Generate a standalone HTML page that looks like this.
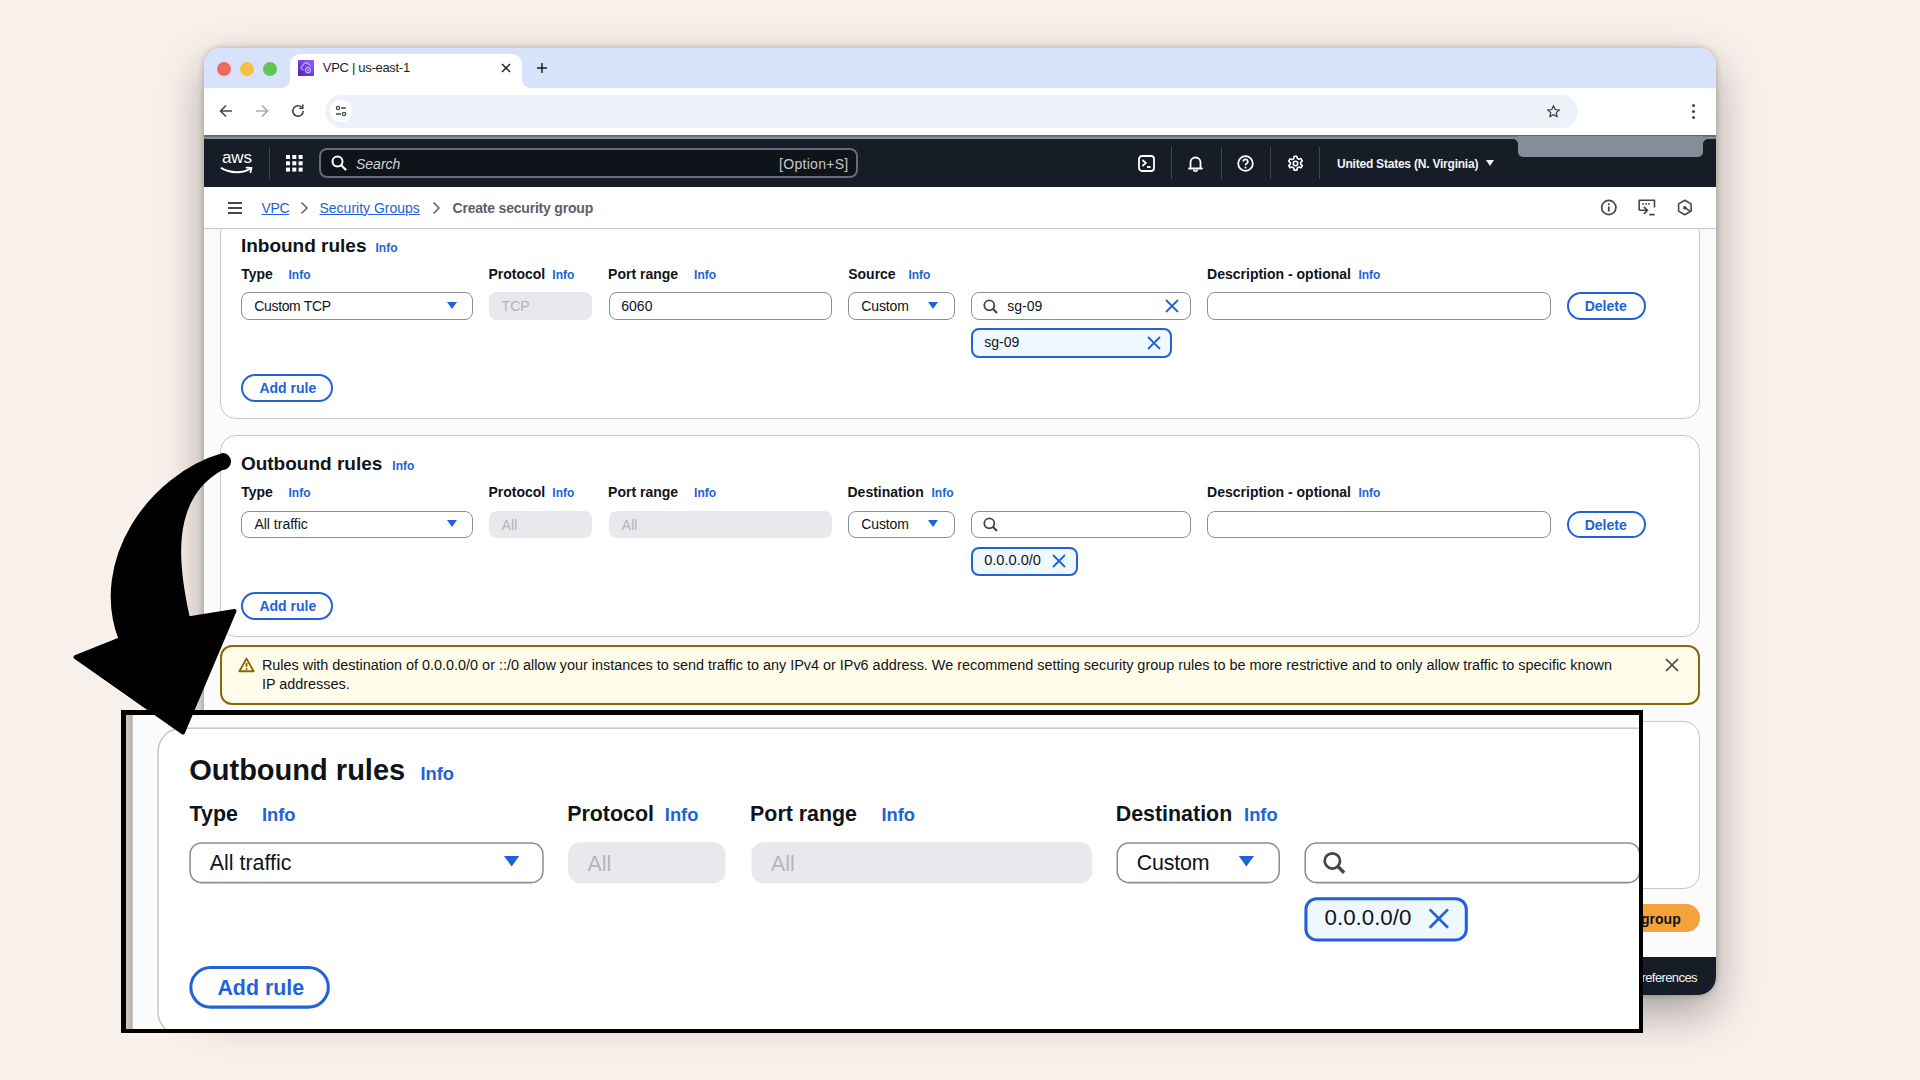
<!DOCTYPE html>
<html><head><meta charset="utf-8"><style>
*{box-sizing:border-box;margin:0;padding:0}
html,body{width:1920px;height:1080px;overflow:hidden}
body{position:relative;background:#f8f0eb;font-family:"Liberation Sans",sans-serif;color:#0f141a}
.a{position:absolute}
.t{position:absolute;line-height:1;white-space:nowrap;font-family:"Liberation Sans",sans-serif}
.b{font-weight:700}
.win{position:absolute;left:204px;top:48px;width:1512px;height:947px;border-radius:18px;overflow:hidden;background:#fbfbfb}
.shadow{position:absolute;left:204px;top:48px;width:1512px;height:947px;border-radius:18px;box-shadow:0 18px 44px rgba(10,8,5,.34),0 0 6px rgba(10,8,5,.24)}
.cont{position:absolute;left:16px;width:1480px;height:202px;background:#fff;border:1px solid #c6c6cd;border-radius:16px}
.lbl{font-size:14px;font-weight:700;color:#0f141a}
.info{font-size:12px;font-weight:700;color:#2262d8}
.inp{position:absolute;top:74.1px;height:27.2px;border:1px solid #8c8c94;border-radius:8px;background:#fff}
.dis{position:absolute;top:74.1px;height:27.2px;border-radius:8px;background:#e9e9ed}
.val{font-size:14px;color:#0f141a}
.dval{font-size:14px;color:#b4b4bb}
.tri{position:absolute;width:0;height:0;border-left:5.1px solid transparent;border-right:5.1px solid transparent;border-top:7.5px solid #2262d8}
.btn{position:absolute;border:2px solid #2262d8;border-radius:16px;background:#fff}
.btxt{font-size:14px;font-weight:700;color:#2262d8}
.tok{position:absolute;top:110.2px;height:29.1px;border:2px solid #2262d8;border-radius:8px;background:#f0f8ff}
</style></head><body>

<div class="shadow"></div>
<div class="win">
  
  <!-- tab bar -->
  <div class="a" style="left:0;top:0;width:1512px;height:40px;background:#d6e3fa"></div>
  <div class="a" style="left:13px;top:13.7px;width:14px;height:14px;border-radius:50%;background:#ee6a5f"></div>
  <div class="a" style="left:36px;top:13.7px;width:14px;height:14px;border-radius:50%;background:#f4c145"></div>
  <div class="a" style="left:59px;top:13.7px;width:14px;height:14px;border-radius:50%;background:#61c454"></div>
  <div class="a" style="left:86px;top:6px;width:232px;height:35px;background:#fff;border-radius:10px 10px 0 0"></div>
  <div class="a" style="left:78px;top:32px;width:8px;height:8px;background:radial-gradient(circle at 0 0,#d6e3fa 7.5px,#fff 8px)"></div>
  <div class="a" style="left:318px;top:32px;width:8px;height:8px;background:radial-gradient(circle at 100% 0,#d6e3fa 7.5px,#fff 8px)"></div>
  <div class="a" style="left:94px;top:12px;width:16px;height:16px;border-radius:1px;background:linear-gradient(45deg,#4a1fb0,#7a45e0 55%,#9060f5)"></div>
  <svg class="a" style="left:94px;top:12px" width="16" height="16" viewBox="0 0 16 16"><path d="M5.6 9.6C3.6 9.8 2.7 8.6 3 7.5C3.3 6.6 4 6.3 4.6 6.3C4.9 4.1 6.4 2.7 8 2.8C9.7 2.9 10.9 4 11.4 5C12.2 5.4 12.7 5.9 12.9 6.4" fill="none" stroke="#e6dcff" stroke-width="1"/><rect x="7.6" y="7.5" width="4.8" height="5.5" rx="2.3" fill="none" stroke="#e6dcff" stroke-width="1"/><path d="M9.4 9.2V11.4M10.6 9.2V11.4" stroke="#e6dcff" stroke-width=".6"/></svg>
  <div class="t" style="left:118.8px;top:13.1px;font-size:13px;color:#1f1f1f;letter-spacing:-0.3px">VPC | us-east-1</div>
  <svg class="a" style="left:296px;top:14px" width="12" height="12" viewBox="0 0 12 12"><path d="M2 2L10 10M10 2L2 10" stroke="#1f1f1f" stroke-width="1.5"/></svg>
  <svg class="a" style="left:332px;top:14px" width="12" height="12" viewBox="0 0 12 12"><path d="M6 1V11M1 6H11" stroke="#1f1f1f" stroke-width="1.5"/></svg>
  <!-- toolbar -->
  <div class="a" style="left:0;top:40px;width:1512px;height:47px;background:#fff;border-radius:10px 10px 0 0"></div>
  <svg class="a" style="left:14px;top:55px" width="16" height="16" viewBox="0 0 16 16"><path d="M14 8H3M8 2.5L2.5 8L8 13.5" fill="none" stroke="#474747" stroke-width="1.6"/></svg>
  <svg class="a" style="left:50px;top:55px" width="16" height="16" viewBox="0 0 16 16"><path d="M2 8H13M8 2.5L13.5 8L8 13.5" fill="none" stroke="#a8abb0" stroke-width="1.6"/></svg>
  <svg class="a" style="left:86px;top:55px" width="16" height="16" viewBox="0 0 16 16"><path d="M13.2 8a5.2 5.2 0 1 1-1.5-3.7" fill="none" stroke="#474747" stroke-width="1.6"/><path d="M12.8 1.6V5.2H9.2" fill="none" stroke="#474747" stroke-width="1.6"/></svg>
  <div class="a" style="left:121px;top:46.5px;width:1253px;height:33px;border-radius:17px;background:#edf2fa"></div>
  <div class="a" style="left:126px;top:52px;width:22px;height:22px;border-radius:50%;background:#fff"></div>
  <svg class="a" style="left:131px;top:57px" width="12" height="12" viewBox="0 0 12 12"><circle cx="3" cy="3" r="1.6" fill="none" stroke="#474747" stroke-width="1.2"/><path d="M6 3H11M1 9H6" stroke="#474747" stroke-width="1.3"/><circle cx="9" cy="9" r="1.6" fill="none" stroke="#474747" stroke-width="1.2"/></svg>
  <svg class="a" style="left:1342px;top:56px" width="15" height="15" viewBox="0 0 16 16"><path d="M8 1.8L9.8 5.9L14.2 6.3L10.9 9.2L11.9 13.6L8 11.3L4.1 13.6L5.1 9.2L1.8 6.3L6.2 5.9Z" fill="none" stroke="#474747" stroke-width="1.4" stroke-linejoin="round"/></svg>
  <div class="a" style="left:1488px;top:55.5px;width:3.2px;height:3.2px;border-radius:50%;background:#474747"></div>
  <div class="a" style="left:1488px;top:61.7px;width:3.2px;height:3.2px;border-radius:50%;background:#474747"></div>
  <div class="a" style="left:1488px;top:67.8px;width:3.2px;height:3.2px;border-radius:50%;background:#474747"></div>
  <!-- aws header -->
  <div class="a" style="left:0;top:87px;width:1512px;height:4px;background:linear-gradient(#5f6773 0,#5f6773 25%,#868d99 60%)"></div>
  <div class="a" style="left:0;top:91px;width:1512px;height:48px;background:#161d26"></div>
  <div class="a" style="left:1313.6px;top:88px;width:185.2px;height:21px;background:#868d99;border-radius:0 0 5px 5px"></div>
  <div class="a" style="left:1308.6px;top:91px;width:5px;height:5px;background:radial-gradient(circle at 0 100%,#161d26 4.6px,#868d99 5.2px)"></div>
  <div class="a" style="left:1498.8px;top:91px;width:5px;height:5px;background:radial-gradient(circle at 100% 100%,#161d26 4.6px,#868d99 5.2px)"></div>
  <div class="t" style="left:18px;top:100.6px;font-size:17px;color:#fff;letter-spacing:-0.1px">aws</div>
  <svg class="a" style="left:16px;top:118px" width="34" height="9" viewBox="0 0 34 9"><path d="M1.5 2.2C10 7.5 23 7.5 30.5 2.5" fill="none" stroke="#fff" stroke-width="2" stroke-linecap="round"/><path d="M26.5 1.6L31.5 1.8L30.5 6.2" fill="none" stroke="#fff" stroke-width="1.8" stroke-linecap="round" stroke-linejoin="round"/></svg>
  <div class="a" style="left:65.2px;top:99.3px;width:1px;height:31.5px;background:#424650"></div>
  <svg class="a" style="left:82px;top:107px" width="17" height="17" viewBox="0 0 17 17" fill="#fff"><rect x="0" y="0" width="4" height="4"/><rect x="6.3" y="0" width="4" height="4"/><rect x="12.6" y="0" width="4" height="4"/><rect x="0" y="6.3" width="4" height="4"/><rect x="6.3" y="6.3" width="4" height="4"/><rect x="12.6" y="6.3" width="4" height="4"/><rect x="0" y="12.6" width="4" height="4"/><rect x="6.3" y="12.6" width="4" height="4"/><rect x="12.6" y="12.6" width="4" height="4"/></svg>
  <div class="a" style="left:115.3px;top:100.4px;width:538.7px;height:29.2px;border:2px solid #656c78;border-radius:8px;background:#0f141a"></div>
  <svg class="a" style="left:127px;top:107px" width="16" height="16" viewBox="0 0 16 16"><circle cx="6.5" cy="6.5" r="5" fill="none" stroke="#fff" stroke-width="2"/><path d="M10.2 10.2L14.5 14.5" stroke="#fff" stroke-width="2.2" stroke-linecap="round"/></svg>
  <div class="t" style="left:152px;top:108.9px;font-size:14px;font-style:italic;color:#d1d1d6">Search</div>
  <div class="t" style="left:575px;top:108.9px;font-size:14px;color:#c6c6cd;letter-spacing:0.3px">[Option+S]</div>
  <svg class="a" style="left:934px;top:107px" width="17" height="17" viewBox="0 0 17 17"><rect x="1" y="1" width="15" height="15" rx="3" fill="none" stroke="#fff" stroke-width="1.8"/><path d="M4.5 5L7.8 8L4.5 11" fill="none" stroke="#fff" stroke-width="1.8"/><path d="M9 12H12.5" stroke="#fff" stroke-width="1.8"/></svg>
  <div class="a" style="left:966.5px;top:99.3px;width:1px;height:31.5px;background:#424650"></div>
  <svg class="a" style="left:983px;top:107px" width="17" height="17" viewBox="0 0 17 17"><path d="M3.5 12.5V7.5a5 5 0 0 1 10 0v5l1.5 1H2z" fill="none" stroke="#fff" stroke-width="1.8" stroke-linejoin="round"/><path d="M6.8 14.5a1.7 1.7 0 0 0 3.4 0" fill="none" stroke="#fff" stroke-width="1.6"/></svg>
  <div class="a" style="left:1016.5px;top:99.3px;width:1px;height:31.5px;background:#424650"></div>
  <svg class="a" style="left:1033px;top:107px" width="17" height="17" viewBox="0 0 17 17"><circle cx="8.5" cy="8.5" r="7.3" fill="none" stroke="#fff" stroke-width="1.8"/><path d="M6.2 6.6a2.3 2.3 0 1 1 3.2 2.1c-.7.3-.9.8-.9 1.5" fill="none" stroke="#fff" stroke-width="1.7"/><circle cx="8.5" cy="12.6" r="1" fill="#fff"/></svg>
  <div class="a" style="left:1065.7px;top:99.3px;width:1px;height:31.5px;background:#424650"></div>
  <svg class="a" style="left:1083px;top:107px" width="17" height="17" viewBox="0 0 17 17"><path d="M7.2 1.2h2.6l.5 2.2 1.6.9 2.1-.7 1.3 2.2-1.6 1.5v1.8l1.6 1.5-1.3 2.2-2.1-.7-1.6.9-.5 2.2H7.2l-.5-2.2-1.6-.9-2.1.7-1.3-2.2L3.3 9.4V7.6L1.7 6.1 3 3.9l2.1.7 1.6-.9z" fill="none" stroke="#fff" stroke-width="1.6" stroke-linejoin="round"/><circle cx="8.5" cy="8.5" r="2.2" fill="none" stroke="#fff" stroke-width="1.6"/></svg>
  <div class="a" style="left:1114.7px;top:99.3px;width:1px;height:31.5px;background:#424650"></div>
  <div class="t b" style="left:1133px;top:109.7px;font-size:12px;color:#f2f3f3;letter-spacing:-0.22px">United States (N. Virginia)</div>
  <div class="a" style="left:1282px;top:112.3px;width:0;height:0;border-left:4px solid transparent;border-right:4px solid transparent;border-top:6px solid #f2f3f3"></div>
  
  <div class="cont" style="top:169.3px">
    <div class="t b" style="left:19.9px;top:17.6px;font-size:19px;color:#0f141a">Inbound rules</div>
    <div class="t info" style="left:154.5px;top:23.3px">Info</div>
    
    <div class="t lbl" style="left:20.2px;top:48.85px">Type</div><div class="t info" style="left:67.5px;top:50.5px">Info</div>
    <div class="t lbl" style="left:267.4px;top:48.85px">Protocol</div><div class="t info" style="left:331.3px;top:50.5px">Info</div>
    <div class="t lbl" style="left:387.1px;top:48.85px">Port range</div><div class="t info" style="left:473.1px;top:50.5px">Info</div>
    <div class="t lbl" style="left:627.2px;top:48.85px">Source</div><div class="t info" style="left:687.4px;top:50.5px">Info</div>
    <div class="t lbl" style="left:986.1px;top:48.85px">Description - optional</div><div class="t info" style="left:1137.4px;top:50.5px">Info</div>
    <div class="inp" style="left:20px;width:231.5px"></div>
    <div class="t val" style="left:33.3px;top:80.65px;letter-spacing:-0.35px">Custom TCP</div>
    <div class="tri" style="left:225.7px;top:83.9px"></div>
    <div class="dis" style="left:267.9px;width:103.4px"></div>
    <div class="t dval" style="left:280.6px;top:81.1px">TCP</div>
    <div class="inp" style="left:387.9px;width:222.9px"></div>
    <div class="t val" style="left:400.3px;top:80.85px">6060</div>
    <div class="inp" style="left:627.1px;width:106.5px"></div>
    <div class="t val" style="left:640.2px;top:80.85px;letter-spacing:-0.1px">Custom</div>
    <div class="tri" style="left:707.3px;top:83.7px"></div>
    <div class="inp" style="left:749.7px;width:220.3px"></div>
    <svg class="a" style="left:762px;top:80.5px" width="16" height="16" viewBox="0 0 16 16"><circle cx="6.3" cy="6.3" r="5" fill="none" stroke="#424650" stroke-width="1.8"/><path d="M9.8 9.8L14 14" stroke="#424650" stroke-width="2.2"/></svg>
    <div class="t val" style="left:786.2px;top:81.1px">sg-09</div>
    <svg class="a" style="left:943.5px;top:80.5px" width="14" height="14" viewBox="0 0 14 14"><path d="M1 1L13 13M13 1L1 13" stroke="#2262d8" stroke-width="1.8"/></svg>
    <div class="inp" style="left:986.2px;width:343.4px"></div>
    <div class="btn" style="left:1346px;top:74.1px;width:78.5px;height:27.5px"></div>
    <div class="t btxt" style="left:1363.7px;top:80.95px">Delete</div>
    <div class="tok" style="left:750px;width:201px"></div>
    <div class="t val" style="left:763.3px;top:116.55px">sg-09</div>
    <svg class="a" style="left:925.5px;top:117.5px" width="14" height="14" viewBox="0 0 14 14"><path d="M1 1L13 13M13 1L1 13" stroke="#2262d8" stroke-width="1.8"/></svg>
    <div class="btn" style="left:20.25px;top:155.7px;width:92.15px;height:27.75px"></div>
    <div class="t btxt" style="left:38.4px;top:162.65px">Add rule</div>
  </div>
  
  <!-- breadcrumb -->
  <div class="a" style="left:0;top:139px;width:1512px;height:42px;background:#fff;border-bottom:1px solid #c6c6cd"></div>
  <div class="a" style="left:24px;top:153.6px;width:14px;height:2px;background:#424650"></div>
  <div class="a" style="left:24px;top:159px;width:14px;height:2px;background:#424650"></div>
  <div class="a" style="left:24px;top:164.4px;width:14px;height:2px;background:#424650"></div>
  <div class="t" style="left:57.5px;top:152.6px;font-size:14px;color:#2262d8;text-decoration:underline;letter-spacing:-0.4px">VPC</div>
  <svg class="a" style="left:95px;top:153px" width="11" height="14" viewBox="0 0 11 14"><path d="M2.5 1.5L8 7L2.5 12.5" fill="none" stroke="#656871" stroke-width="1.6"/></svg>
  <div class="t" style="left:115.5px;top:152.6px;font-size:14px;color:#2262d8;text-decoration:underline">Security Groups</div>
  <svg class="a" style="left:227px;top:153px" width="11" height="14" viewBox="0 0 11 14"><path d="M2.5 1.5L8 7L2.5 12.5" fill="none" stroke="#656871" stroke-width="1.6"/></svg>
  <div class="t b" style="left:248.5px;top:152.6px;font-size:14px;color:#5b616b;letter-spacing:-0.2px">Create security group</div>
  <svg class="a" style="left:1396px;top:151px" width="18" height="18" viewBox="0 0 18 18"><circle cx="8.8" cy="8.5" r="7.1" fill="none" stroke="#424650" stroke-width="1.7"/><path d="M8.8 7.6V12.4" stroke="#424650" stroke-width="1.8"/><circle cx="8.8" cy="5.2" r="1" fill="#424650"/></svg>
  <svg class="a" style="left:1434px;top:151px" width="18" height="18" viewBox="0 0 18 18"><path d="M1.2 11.3V1.2H16.5V8.6" fill="none" stroke="#424650" stroke-width="1.6" stroke-linejoin="round"/><path d="M1.2 11.3H9.4M5.8 7.8L9.5 11.3L5.8 14.9" fill="none" stroke="#424650" stroke-width="1.6"/><path d="M11.3 15.6H16.7" stroke="#424650" stroke-width="1.6"/><circle cx="5" cy="4.9" r=".9" fill="#424650"/><circle cx="8" cy="4.9" r=".9" fill="#424650"/><circle cx="11" cy="4.9" r=".9" fill="#424650"/></svg>
  <svg class="a" style="left:1472px;top:151px" width="18" height="18" viewBox="0 0 18 18"><path d="M8.8 1.2L15.1 4.9V12.1L8.8 15.8L2.6 12.1V4.9Z" fill="none" stroke="#424650" stroke-width="1.6" stroke-linejoin="round"/><circle cx="8.8" cy="8.7" r="1.8" fill="#424650"/><path d="M8.8 8.7L14.4 12.4" stroke="#424650" stroke-width="1.6"/></svg>
  
  <div class="cont" style="top:386.8px"><div class="a" style="left:0;top:0.8px;width:1478px;height:200px">
    <div class="t b" style="left:19.9px;top:17.6px;font-size:19px;color:#0f141a">Outbound rules</div>
    <div class="t info" style="left:171.3px;top:23.3px">Info</div>
    
    <div class="t lbl" style="left:20.2px;top:48.85px">Type</div><div class="t info" style="left:67.5px;top:50.5px">Info</div>
    <div class="t lbl" style="left:267.4px;top:48.85px">Protocol</div><div class="t info" style="left:331.3px;top:50.5px">Info</div>
    <div class="t lbl" style="left:387.1px;top:48.85px">Port range</div><div class="t info" style="left:473.1px;top:50.5px">Info</div>
    <div class="t lbl" style="left:626.5px;top:48.85px">Destination</div><div class="t info" style="left:710.5px;top:50.5px">Info</div>
    <div class="t lbl" style="left:986.1px;top:48.85px">Description - optional</div><div class="t info" style="left:1137.4px;top:50.5px">Info</div>
    <div class="inp" style="left:20px;width:231.5px"></div>
    <div class="t val" style="left:33.4px;top:80.65px">All traffic</div>
    <div class="tri" style="left:225.7px;top:83.9px"></div>
    <div class="dis" style="left:267.9px;width:103.4px"></div>
    <div class="t dval" style="left:280.7px;top:81.1px">All</div>
    <div class="dis" style="left:387.9px;width:222.9px"></div>
    <div class="t dval" style="left:400.8px;top:81.1px">All</div>
    <div class="inp" style="left:627.1px;width:106.5px"></div>
    <div class="t val" style="left:640.2px;top:80.85px;letter-spacing:-0.1px">Custom</div>
    <div class="tri" style="left:707.3px;top:83.7px"></div>
    <div class="inp" style="left:749.7px;width:220.3px"></div>
    <svg class="a" style="left:762px;top:80.5px" width="16" height="16" viewBox="0 0 16 16"><circle cx="6.3" cy="6.3" r="5" fill="none" stroke="#424650" stroke-width="1.8"/><path d="M9.8 9.8L14 14" stroke="#424650" stroke-width="2.2"/></svg>
    <div class="inp" style="left:986.2px;width:343.4px"></div>
    <div class="btn" style="left:1346px;top:74.1px;width:78.5px;height:27.5px"></div>
    <div class="t btxt" style="left:1363.7px;top:80.95px">Delete</div>
    <div class="tok" style="left:750px;width:106.6px"></div>
    <div class="t val" style="left:763.2px;top:116.55px;font-size:14.6px">0.0.0.0/0</div>
    <svg class="a" style="left:831.2px;top:117.5px" width="14" height="14" viewBox="0 0 14 14"><path d="M1 1L13 13M13 1L1 13" stroke="#2262d8" stroke-width="1.8"/></svg>
    <div class="btn" style="left:20.25px;top:155.7px;width:92.15px;height:27.75px"></div>
    <div class="t btxt" style="left:38.4px;top:162.65px">Add rule</div>
  </div></div>
  
  <!-- alert -->
  <div class="a" style="left:16px;top:597.3px;width:1480px;height:59.5px;border:2px solid #8d6605;border-radius:12px;background:#fffce9"></div>
  <svg class="a" style="left:33.5px;top:608.5px" width="17" height="16" viewBox="0 0 17 16"><path d="M8.5 1.6L15.6 14.3H1.4Z" fill="none" stroke="#8d6605" stroke-width="1.9" stroke-linejoin="round"/><path d="M8.5 6V9.8" stroke="#8d6605" stroke-width="1.9"/><circle cx="8.5" cy="12" r="1.05" fill="#8d6605"/></svg>
  <div class="a" style="left:57.9px;top:607.6px;width:1360px;font-size:14.42px;line-height:19.75px;color:#0f141a;white-space:normal">Rules with destination of 0.0.0.0/0 or ::/0 allow your instances to send traffic to any IPv4 or IPv6 address. We recommend setting security group rules to be more restrictive and to only allow traffic to specific known IP addresses.</div>
  <svg class="a" style="left:1460.7px;top:609.5px" width="14" height="14" viewBox="0 0 14 14"><path d="M1 1L13 13M13 1L1 13" stroke="#424650" stroke-width="1.7"/></svg>
  <!-- third container -->
  <div class="cont" style="top:673.4px;height:168px"></div>
  <!-- primary button -->
  <div class="a" style="left:1314.5px;top:856.4px;width:181px;height:27.6px;border-radius:14px;background:#f3a33a"></div>
  <div class="t b" style="left:1332px;top:864.2px;font-size:14px;color:#0f141a">Create security group</div>
  <!-- footer -->
  <div class="a" style="left:0;top:909px;width:1512px;height:38px;background:#161d26"></div>
  <div class="t" style="left:1391px;top:922.7px;font-size:13px;color:#f2f3f3;letter-spacing:-0.6px">Cookie preferences</div>
</div>

<div class="a" style="left:121px;top:710px;width:1522px;height:323px;border-style:solid;border-color:#000;border-width:5px 4px 4px 5px;background:#fff;overflow:hidden">
  <div class="a" style="left:0;top:0;width:1920px;height:1080px;transform-origin:0 0;transform:translate(-304.8px,-653.4px) scale(1.5275);background:#f8f0eb">
    <div class="shadow"></div>
    <div class="win">
      
  <div class="cont" style="top:387.6px"><div class="a" style="left:0;top:0px;width:1478px;height:200px">
    <div class="t b" style="left:19.9px;top:17.6px;font-size:19px;color:#0f141a">Outbound rules</div>
    <div class="t info" style="left:171.3px;top:23.3px">Info</div>
    
    <div class="t lbl" style="left:20.2px;top:48.85px">Type</div><div class="t info" style="left:67.5px;top:50.5px">Info</div>
    <div class="t lbl" style="left:267.4px;top:48.85px">Protocol</div><div class="t info" style="left:331.3px;top:50.5px">Info</div>
    <div class="t lbl" style="left:387.1px;top:48.85px">Port range</div><div class="t info" style="left:473.1px;top:50.5px">Info</div>
    <div class="t lbl" style="left:626.5px;top:48.85px">Destination</div><div class="t info" style="left:710.5px;top:50.5px">Info</div>
    <div class="t lbl" style="left:986.1px;top:48.85px">Description - optional</div><div class="t info" style="left:1137.4px;top:50.5px">Info</div>
    <div class="inp" style="left:20px;width:231.5px"></div>
    <div class="t val" style="left:33.4px;top:80.65px">All traffic</div>
    <div class="tri" style="left:225.7px;top:83.9px"></div>
    <div class="dis" style="left:267.9px;width:103.4px"></div>
    <div class="t dval" style="left:280.7px;top:81.1px">All</div>
    <div class="dis" style="left:387.9px;width:222.9px"></div>
    <div class="t dval" style="left:400.8px;top:81.1px">All</div>
    <div class="inp" style="left:627.1px;width:106.5px"></div>
    <div class="t val" style="left:640.2px;top:80.85px;letter-spacing:-0.1px">Custom</div>
    <div class="tri" style="left:707.3px;top:83.7px"></div>
    <div class="inp" style="left:749.7px;width:220.3px"></div>
    <svg class="a" style="left:762px;top:80.5px" width="16" height="16" viewBox="0 0 16 16"><circle cx="6.3" cy="6.3" r="5" fill="none" stroke="#424650" stroke-width="1.8"/><path d="M9.8 9.8L14 14" stroke="#424650" stroke-width="2.2"/></svg>
    <div class="inp" style="left:986.2px;width:343.4px"></div>
    <div class="btn" style="left:1346px;top:74.1px;width:78.5px;height:27.5px"></div>
    <div class="t btxt" style="left:1363.7px;top:80.95px">Delete</div>
    <div class="tok" style="left:750px;width:106.6px"></div>
    <div class="t val" style="left:763.2px;top:116.55px;font-size:14.6px">0.0.0.0/0</div>
    <svg class="a" style="left:831.2px;top:117.5px" width="14" height="14" viewBox="0 0 14 14"><path d="M1 1L13 13M13 1L1 13" stroke="#2262d8" stroke-width="1.8"/></svg>
    <div class="btn" style="left:20.25px;top:155.7px;width:92.15px;height:27.75px"></div>
    <div class="t btxt" style="left:38.4px;top:162.65px">Add rule</div>
  </div></div>
    </div>
  </div>
</div>

<svg class="a" style="left:0;top:0" width="1920" height="1080" viewBox="0 0 1920 1080">
<path d="M223 455 C149.8 476.3 91 561.3 120.5 639 L75.5 657 L183 732.5 L234.5 611 L188 618.5 C176.8 568.8 166.3 498.2 222 468 A 6.5 6.5 0 0 0 223 455 Z" fill="#000" stroke="#000" stroke-width="4" stroke-linejoin="round"/>
</svg>
</body></html>
